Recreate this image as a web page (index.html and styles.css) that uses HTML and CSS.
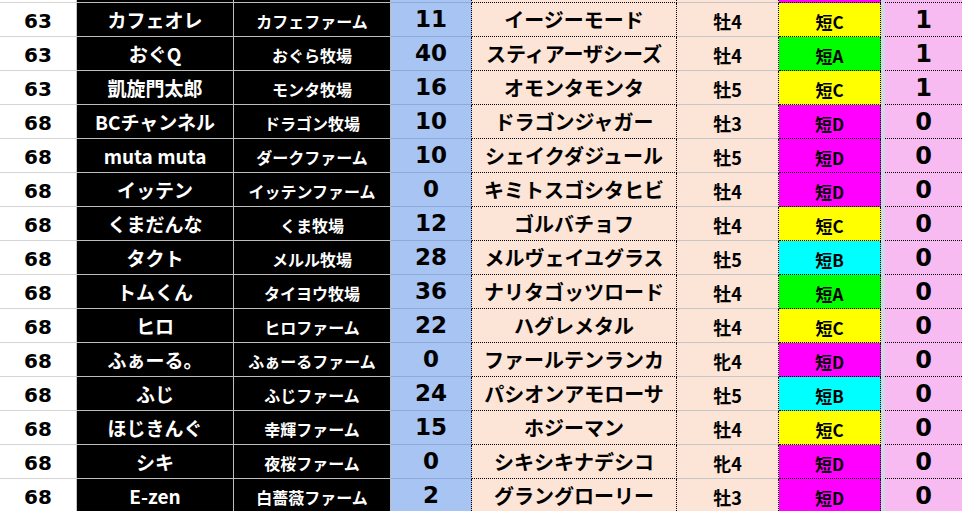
FILE: index.html
```html
<!DOCTYPE html>
<html lang="ja">
<head>
<meta charset="utf-8">
<link rel="stylesheet" href="styles.css">
</head>
<body>
<div class="sheet">
  <div class="c a top"></div><div class="c b top"></div><div class="c f top"></div><div class="c d top"></div><div class="c e top"></div><div class="c s top"></div><div class="c g gd top"></div><div class="gap top"></div><div class="c h top"></div>

  <div class="c a">63</div><div class="c b">カフェオレ</div><div class="c f">カフェファーム</div><div class="c d">11</div><div class="c e">イージーモード</div><div class="c s">牡4</div><div class="c g gc">短C</div><div class="gap"></div><div class="c h">1</div>
  <div class="c a">63</div><div class="c b">おぐQ</div><div class="c f">おぐら牧場</div><div class="c d">40</div><div class="c e">スティアーザシーズ</div><div class="c s">牡4</div><div class="c g ga">短A</div><div class="gap"></div><div class="c h">1</div>
  <div class="c a">63</div><div class="c b">凱旋門太郎</div><div class="c f">モンタ牧場</div><div class="c d">16</div><div class="c e">オモンタモンタ</div><div class="c s">牡5</div><div class="c g gc">短C</div><div class="gap"></div><div class="c h">1</div>
  <div class="c a">68</div><div class="c b">BCチャンネル</div><div class="c f">ドラゴン牧場</div><div class="c d">10</div><div class="c e">ドラゴンジャガー</div><div class="c s">牡3</div><div class="c g gd">短D</div><div class="gap"></div><div class="c h">0</div>
  <div class="c a">68</div><div class="c b">muta muta</div><div class="c f">ダークファーム</div><div class="c d">10</div><div class="c e">シェイクダジュール</div><div class="c s">牡5</div><div class="c g gd">短D</div><div class="gap"></div><div class="c h">0</div>
  <div class="c a">68</div><div class="c b">イッテン</div><div class="c f">イッテンファーム</div><div class="c d">0</div><div class="c e">キミトスゴシタヒビ</div><div class="c s">牡4</div><div class="c g gd">短D</div><div class="gap"></div><div class="c h">0</div>
  <div class="c a">68</div><div class="c b">くまだんな</div><div class="c f">くま牧場</div><div class="c d">12</div><div class="c e">ゴルバチョフ</div><div class="c s">牡4</div><div class="c g gc">短C</div><div class="gap"></div><div class="c h">0</div>
  <div class="c a">68</div><div class="c b">タクト</div><div class="c f">メルル牧場</div><div class="c d">28</div><div class="c e">メルヴェイユグラス</div><div class="c s">牡5</div><div class="c g gb">短B</div><div class="gap"></div><div class="c h">0</div>
  <div class="c a">68</div><div class="c b">トムくん</div><div class="c f">タイヨウ牧場</div><div class="c d">36</div><div class="c e">ナリタゴッツロード</div><div class="c s">牡4</div><div class="c g ga">短A</div><div class="gap"></div><div class="c h">0</div>
  <div class="c a">68</div><div class="c b">ヒロ</div><div class="c f">ヒロファーム</div><div class="c d">22</div><div class="c e">ハグレメタル</div><div class="c s">牡4</div><div class="c g gc">短C</div><div class="gap"></div><div class="c h">0</div>
  <div class="c a">68</div><div class="c b">ふぁーる。</div><div class="c f">ふぁーるファーム</div><div class="c d">0</div><div class="c e">ファールテンランカ</div><div class="c s">牝4</div><div class="c g gd">短D</div><div class="gap"></div><div class="c h">0</div>
  <div class="c a">68</div><div class="c b">ふじ</div><div class="c f">ふじファーム</div><div class="c d">24</div><div class="c e">パシオンアモローサ</div><div class="c s">牡5</div><div class="c g gb">短B</div><div class="gap"></div><div class="c h">0</div>
  <div class="c a">68</div><div class="c b">ほじきんぐ</div><div class="c f">幸輝ファーム</div><div class="c d">15</div><div class="c e">ホジーマン</div><div class="c s">牡4</div><div class="c g gc">短C</div><div class="gap"></div><div class="c h">0</div>
  <div class="c a">68</div><div class="c b">シキ</div><div class="c f">夜桜ファーム</div><div class="c d">0</div><div class="c e">シキシキナデシコ</div><div class="c s">牝4</div><div class="c g gd">短D</div><div class="gap"></div><div class="c h">0</div>
  <div class="c a">68</div><div class="c b">E-zen</div><div class="c f">白薔薇ファーム</div><div class="c d">2</div><div class="c e">グラングローリー</div><div class="c s">牡3</div><div class="c g gd">短D</div><div class="gap"></div><div class="c h">0</div>
</div>
</body>
</html>
```

FILE: styles.css
```css
html, body {
  margin: 0;
  padding: 0;
  background: #ffffff;
  overflow: hidden;
}
.sheet {
  display: grid;
  grid-template-columns: 77px 157px 157px 81px 205px 102px 102px 4px 77px;
  grid-auto-rows: 34px;
  grid-template-rows: 3px;
  width: 962px;
  font-family: "Noto Sans CJK JP", "Noto Sans", sans-serif;
  font-weight: 700;
  color: #000;
}
.c {
  box-sizing: border-box;
  display: flex;
  align-items: center;
  justify-content: center;
  white-space: nowrap;
  overflow: hidden;
  line-height: 1;
}
.a {
  background: #fff;
  border-right: 1px solid #c6c6c6;
  border-bottom: 1px solid #d4d4d4;
  font-family: "DejaVu Sans", sans-serif;
  font-size: 20px;
  padding-top: 2px;
}
.b {
  background: #000;
  color: #fff;
  border-right: 1px solid #bdbdbd;
  border-bottom: 1px solid #bdbdbd;
  font-size: 19px;
}
.f {
  background: #000;
  color: #fff;
  border-right: 1px solid #bdbdbd;
  border-bottom: 1px solid #bdbdbd;
  font-size: 16px;
  padding-top: 3px;
}
.d {
  background: #a8c4f2;
  border-bottom: 1px solid #8eaadb;
  border-right: 1px dotted #000;
  font-family: "DejaVu Sans", sans-serif;
  font-size: 23px;
}
.e {
  background: #fce4d6;
  border-right: 1px dotted #000;
  border-bottom: 1px dotted #000;
  font-size: 20px;
}
.s {
  background: #fce4d6;
  border-right: 1px dotted #000;
  border-bottom: 1px solid #c6c6c6;
  font-size: 18px;
  padding-top: 2px;
}
.g {
  border-right: 1px dotted #000;
  border-bottom: 1px dotted #000;
  font-size: 17px;
  padding-top: 3px;
}
.ga { background: #00ff00; }
.gb { background: #00ffff; }
.gc { background: #ffff00; }
.gd { background: #ff00ff; }
.gap {
  background: #d3d8e6;
}
.h {
  background: #f7bbf1;
  border-bottom: 1px dotted #000;
  font-family: "DejaVu Sans", sans-serif;
  font-size: 24px;
}
.top {
  font-size: 0;
  padding: 0;
}
```
